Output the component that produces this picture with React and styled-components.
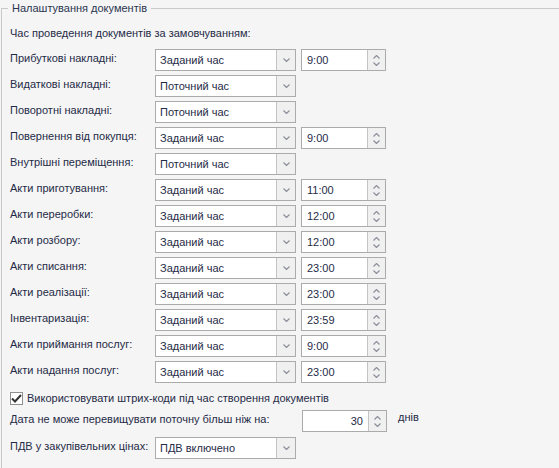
import React from 'react'
import styled, { createGlobalStyle } from 'styled-components'

const Global = createGlobalStyle`
body {
  margin: 0;
  background: #f5f5f5;
  font-family: "Liberation Sans", Arial, sans-serif;
  font-size: 11px;
  color: #1f2b47;
}
`

const rows = [
  { label: 'Прибуткові накладні:', mode: 'Заданий час', time: '9:00' },
  { label: 'Видаткові накладні:', mode: 'Поточний час' },
  { label: 'Поворотні накладні:', mode: 'Поточний час' },
  { label: 'Повернення від покупця:', mode: 'Заданий час', time: '9:00' },
  { label: 'Внутрішні переміщення:', mode: 'Поточний час' },
  { label: 'Акти приготування:', mode: 'Заданий час', time: '11:00' },
  { label: 'Акти переробки:', mode: 'Заданий час', time: '12:00' },
  { label: 'Акти розбору:', mode: 'Заданий час', time: '12:00' },
  { label: 'Акти списання:', mode: 'Заданий час', time: '23:00' },
  { label: 'Акти реалізації:', mode: 'Заданий час', time: '23:00' },
  { label: 'Інвентаризація:', mode: 'Заданий час', time: '23:59' },
  { label: 'Акти приймання послуг:', mode: 'Заданий час', time: '9:00' },
  { label: 'Акти надання послуг:', mode: 'Заданий час', time: '23:00' },
]

const Chevron = ({ up }) => (
  <svg width="7" height="4" viewBox="0 0 7 4">
    <path d={up ? 'M0.5 3.5 L3.5 0.5 L6.5 3.5' : 'M0.5 0.5 L3.5 3.5 L6.5 0.5'} fill="none" stroke="#8a8f99" strokeWidth="1.2" />
  </svg>
)

const Combo = ({ value, width }) => (
  <ComboBox $width={width}>
    <ComboText>{value}</ComboText>
    <ComboButton><Chevron /></ComboButton>
  </ComboBox>
)

const Spin = ({ value, right }) => (
  <SpinBox>
    <SpinText $right={right}>{value}</SpinText>
    <SpinButtons>
      <Chevron up />
      <Chevron />
    </SpinButtons>
  </SpinBox>
)

const App = () => {
  return (
    <>
      <Global />
      <Page>
        <Group>
          <Legend>Налаштування документів</Legend>
          <Heading>Час проведення документів за замовчуванням:</Heading>
          <Grid>
            {rows.map((r, i) => (
              <Row key={i}>
                <Label>{r.label}</Label>
                <Combo value={r.mode} />
                {r.time && <Spin value={r.time} />}
              </Row>
            ))}
          </Grid>
          <CheckRow>
            <Check>
              <svg width="11" height="9" viewBox="0 0 11 9">
                <path d="M1 4.5 L4 7.5 L10 1" fill="none" stroke="#333" strokeWidth="2" />
              </svg>
            </Check>
            Використовувати штрих-коди під час створення документів
          </CheckRow>
          <DateRow>
            <Label>Дата не може перевищувати поточну більш ніж на:</Label>
            <Spin value="30" right />
            <Unit>днів</Unit>
          </DateRow>
          <Row>
            <Label>ПДВ у закупівельних цінах:</Label>
            <Combo value="ПДВ включено" />
          </Row>
        </Group>
      </Page>
    </>
  )
}

export default App

const Page = styled.div`
padding: 0 0 0 1px;
height: 468px;
`

const Group = styled.fieldset`
margin: 0;
padding: 0 0 0 8px;
height: 100%;
box-sizing: border-box;
border: none;
border-top: 1px solid #c9c9c9;
border-left: 1px solid #c9c9c9;
min-width: 0;
`

const Legend = styled.legend`
padding: 0 4px;
margin-left: -2px;
line-height: 16px;
color: #2a3550;
`

const Heading = styled.div`
margin-top: 7px;
height: 20px;
line-height: 20px;
`

const Grid = styled.div`
display: flex;
flex-direction: column;
gap: 4px;
margin-top: 6px;
`

const Row = styled.div`
display: flex;
align-items: center;
gap: 5px;
height: 22px;
`

const Label = styled.div`
width: 140px;
flex: none;
white-space: nowrap;
margin-top: -4px;
`

const ComboBox = styled.div`
width: ${p => p.$width || 141}px;
height: 22px;
box-sizing: border-box;
border: 1px solid #ababab;
background: #fff;
display: flex;
`

const ComboText = styled.div`
flex: 1;
padding: 0 4px;
line-height: 20px;
`

const ComboButton = styled.div`
width: 18px;
border-left: 1px solid #c4c4c4;
background: #f0f0f0;
display: flex;
align-items: center;
justify-content: center;
`

const SpinBox = styled.div`
width: 85px;
height: 22px;
box-sizing: border-box;
border: 1px solid #ababab;
background: #fff;
display: flex;
`

const SpinText = styled.div`
flex: 1;
padding: 0 5px;
line-height: 20px;
text-align: ${p => (p.$right ? 'right' : 'left')};
`

const SpinButtons = styled.div`
width: 17px;
border-left: 1px solid #c4c4c4;
background: #f0f0f0;
display: flex;
flex-direction: column;
align-items: center;
justify-content: center;
gap: 3px;
`

const CheckRow = styled.div`
display: flex;
align-items: center;
gap: 4px;
height: 20px;
margin-top: 5px;
`

const Check = styled.div`
width: 13px;
height: 13px;
box-sizing: border-box;
border: 1px solid #8f8f8f;
background: #fff;
display: flex;
align-items: center;
justify-content: center;
`

const DateRow = styled(Row)`
margin: 2px 0 5px;
${Label} {
  width: 287px;
}
`

const Unit = styled.div`
margin-left: 6px;
margin-top: -8px;
`
